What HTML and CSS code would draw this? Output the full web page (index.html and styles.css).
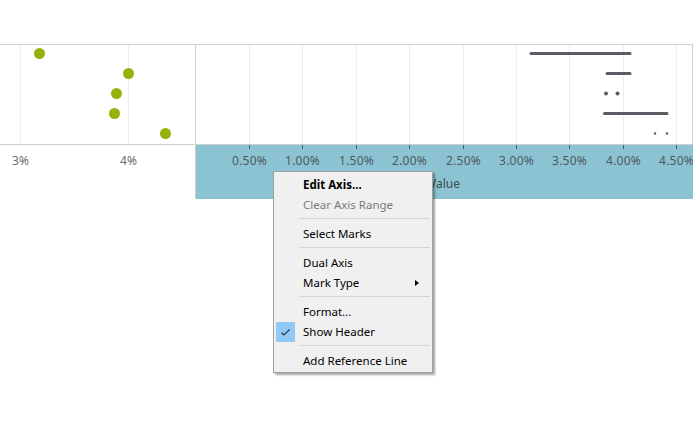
FILE: index.html
```html
<!DOCTYPE html>
<html>
<head>
<meta charset="utf-8">
<link rel="stylesheet" href="styles.css">
</head>
<body>
<div class="view">
  <div class="chart">
    <div class="pane pane-left">
      <svg width="195" height="99" viewBox="0 0 195 99">
        <g class="grid">
          <line x1="20.5" y1="0" x2="20.5" y2="99"/>
          <line x1="128.5" y1="0" x2="128.5" y2="99"/>
        </g>
        <g class="dot">
          <circle cx="39.5" cy="8.5" r="5.5"/>
          <circle cx="128.5" cy="28.5" r="5.5"/>
          <circle cx="116.5" cy="48.5" r="5.5"/>
          <circle cx="114.5" cy="68.5" r="5.5"/>
          <circle cx="165.5" cy="88.5" r="5.5"/>
        </g>
      </svg>
    </div>
    <div class="pane pane-right">
      <svg width="496" height="99" viewBox="0 0 496 99">
        <g class="grid">
          <line x1="53.5" y1="0" x2="53.5" y2="99"/>
          <line x1="106.5" y1="0" x2="106.5" y2="99"/>
          <line x1="160.5" y1="0" x2="160.5" y2="99"/>
          <line x1="213.5" y1="0" x2="213.5" y2="99"/>
          <line x1="267.5" y1="0" x2="267.5" y2="99"/>
          <line x1="320.5" y1="0" x2="320.5" y2="99"/>
          <line x1="373.5" y1="0" x2="373.5" y2="99"/>
          <line x1="427.5" y1="0" x2="427.5" y2="99"/>
          <line x1="480.5" y1="0" x2="480.5" y2="99"/>
        </g>
        <g class="bar">
          <line x1="335" y1="8.5" x2="434" y2="8.5"/>
          <line x1="411" y1="28.5" x2="434" y2="28.5"/>
          <line x1="408.5" y1="68.5" x2="471" y2="68.5"/>
        </g>
        <g class="pt">
          <circle cx="410" cy="48.5" r="2"/>
          <circle cx="421.5" cy="48.5" r="2"/>
          <circle cx="459" cy="88.5" r="1.2"/>
          <circle cx="471" cy="88.5" r="1.2"/>
        </g>
      </svg>
    </div>
    <div class="axis axis-left">
      <svg width="195" height="30" viewBox="0 0 195 30">
        <g class="lbl">
          <text x="20.5" y="15">3%</text>
          <text x="128.5" y="15">4%</text>
        </g>
      </svg>
    </div>
    <div class="axis axis-right">
      <svg width="497" height="30" viewBox="0 0 497 30">
        <g class="tick">
          <line x1="53.5" y1="0" x2="53.5" y2="4"/>
          <line x1="106.5" y1="0" x2="106.5" y2="4"/>
          <line x1="160.5" y1="0" x2="160.5" y2="4"/>
          <line x1="213.5" y1="0" x2="213.5" y2="4"/>
          <line x1="267.5" y1="0" x2="267.5" y2="4"/>
          <line x1="320.5" y1="0" x2="320.5" y2="4"/>
          <line x1="373.5" y1="0" x2="373.5" y2="4"/>
          <line x1="427.5" y1="0" x2="427.5" y2="4"/>
          <line x1="480.5" y1="0" x2="480.5" y2="4"/>
        </g>
        <g class="lbl">
          <text x="53.5" y="15">0.50%</text>
          <text x="106.5" y="15">1.00%</text>
          <text x="160.5" y="15">1.50%</text>
          <text x="213.5" y="15">2.00%</text>
          <text x="267.5" y="15">2.50%</text>
          <text x="320.5" y="15">3.00%</text>
          <text x="373.5" y="15">3.50%</text>
          <text x="427.5" y="15">4.00%</text>
          <text x="480.5" y="15">4.50%</text>
        </g>
      </svg>
      <div class="axis-title">Value</div>
    </div>
  </div>

  <div class="menu">
    <div class="item bold">Edit Axis...</div>
    <div class="item disabled">Clear Axis Range</div>
    <div class="sep"></div>
    <div class="item">Select Marks</div>
    <div class="sep"></div>
    <div class="item">Dual Axis</div>
    <div class="item has-sub">Mark Type<span class="arrow"></span></div>
    <div class="sep"></div>
    <div class="item">Format...</div>
    <div class="item checked"><span class="check"><svg width="19" height="20" viewBox="0 0 19 20"><polyline points="5.5,10.5 8,13 13.5,7.5"/></svg></span>Show Header</div>
    <div class="sep"></div>
    <div class="item">Add Reference Line</div>
  </div>
</div>
</body>
</html>
```

FILE: styles.css
```css
html, body {
  margin: 0;
  padding: 0;
  background: #ffffff;
}

.view {
  position: relative;
  width: 700px;
  height: 438px;
  padding-top: 44px;
  box-sizing: border-box;
  font-family: "Noto Sans", "Open Sans", sans-serif;
}

.chart {
  display: grid;
  grid-template-columns: 196px 497px;
  grid-template-rows: 101px 54px;
}

.pane {
  box-sizing: border-box;
  border-top: 1px solid #cfcfcf;
  border-bottom: 1px solid #cfcfcf;
  border-right: 1px solid #cfcfcf;
}

.pane svg,
.axis svg {
  display: block;
}

.grid line {
  stroke: #ececec;
  stroke-width: 1;
}

.dot circle {
  fill: #93b30a;
}

.bar line {
  stroke: #5a5d64;
  stroke-width: 3;
  stroke-linecap: round;
}

.pt circle {
  fill: #5a5d64;
}

.axis {
  box-sizing: border-box;
}

.axis-left {
  border-right: 1px solid #cfcfcf;
  background: #ffffff;
}

.axis-right {
  background: #8cc3d2;
  display: flex;
  flex-direction: column;
}

.tick line {
  stroke: #4e565b;
  stroke-width: 1;
}

.lbl text {
  font-family: "Noto Sans", "Open Sans", sans-serif;
  font-size: 12px;
  text-anchor: middle;
  dominant-baseline: central;
  letter-spacing: 0.2px;
}

.axis-left .lbl text {
  fill: #6b6b6b;
}

.axis-right .lbl text {
  fill: #4c5a60;
}

.axis-title {
  height: 18px;
  line-height: 18px;
  text-align: center;
  font-size: 12px;
  color: #3c4a50;
}

.menu {
  position: absolute;
  left: 273px;
  top: 171px;
  width: 160px;
  box-sizing: border-box;
  padding: 3px 0 1px;
  background: #f0f0f0;
  border: 1px solid #a0a0a0;
  box-shadow: 2px 2px 2px rgba(0, 0, 0, 0.35);
  font-family: "Noto Sans", "Open Sans", sans-serif;
  font-size: 11.5px;
  color: #000000;
}

.item {
  position: relative;
  height: 20px;
  line-height: 20px;
  padding-left: 29px;
  white-space: nowrap;
}

.item.bold {
  font-weight: bold;
}

.item.disabled {
  color: #7a7a7a;
}

.sep {
  height: 1px;
  margin: 3px 2px 5px 25px;
  background: #d4d4d4;
}

.arrow {
  position: absolute;
  right: 13px;
  top: 7px;
  width: 0;
  height: 0;
  border-top: 3.5px solid transparent;
  border-bottom: 3.5px solid transparent;
  border-left: 4px solid #000000;
}

.check {
  position: absolute;
  left: 2px;
  top: 0;
  width: 19px;
  height: 20px;
  background: #91c9f7;
}

.check svg {
  display: block;
}

.check polyline {
  fill: none;
  stroke: #333840;
  stroke-width: 1.2;
}
```
